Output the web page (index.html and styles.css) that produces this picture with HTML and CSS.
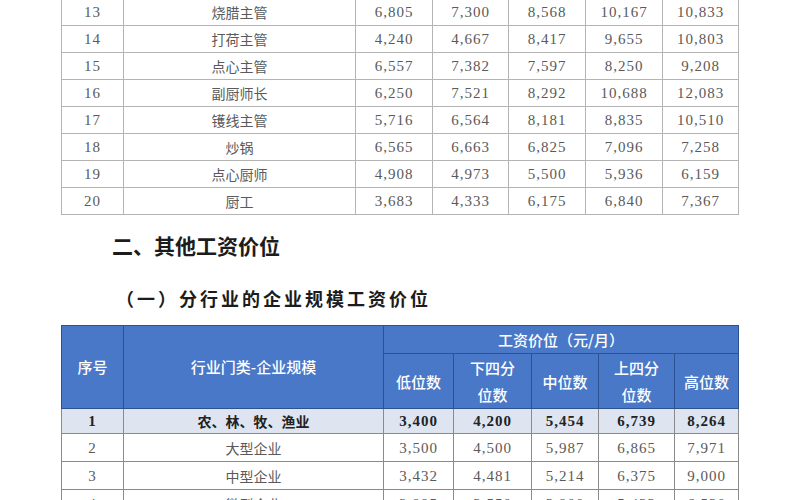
FILE: index.html
```html
<!DOCTYPE html>
<html lang="zh-CN">
<head>
<meta charset="utf-8">
<link rel="stylesheet" href="styles.css">
</head>
<body>
<div class="page">
  <table class="t1">
    <colgroup>
      <col style="width:62px"><col style="width:232px"><col style="width:77px"><col style="width:76px"><col style="width:77px"><col style="width:77px"><col style="width:76px">
    </colgroup>
    <tbody>
      <tr><td class="n">13</td><td>烧腊主管</td><td class="n">6,805</td><td class="n">7,300</td><td class="n">8,568</td><td class="n">10,167</td><td class="n">10,833</td></tr>
      <tr><td class="n">14</td><td>打荷主管</td><td class="n">4,240</td><td class="n">4,667</td><td class="n">8,417</td><td class="n">9,655</td><td class="n">10,803</td></tr>
      <tr><td class="n">15</td><td>点心主管</td><td class="n">6,557</td><td class="n">7,382</td><td class="n">7,597</td><td class="n">8,250</td><td class="n">9,208</td></tr>
      <tr><td class="n">16</td><td>副厨师长</td><td class="n">6,250</td><td class="n">7,521</td><td class="n">8,292</td><td class="n">10,688</td><td class="n">12,083</td></tr>
      <tr><td class="n">17</td><td>镬线主管</td><td class="n">5,716</td><td class="n">6,564</td><td class="n">8,181</td><td class="n">8,835</td><td class="n">10,510</td></tr>
      <tr><td class="n">18</td><td>炒锅</td><td class="n">6,565</td><td class="n">6,663</td><td class="n">6,825</td><td class="n">7,096</td><td class="n">7,258</td></tr>
      <tr><td class="n">19</td><td>点心厨师</td><td class="n">4,908</td><td class="n">4,973</td><td class="n">5,500</td><td class="n">5,936</td><td class="n">6,159</td></tr>
      <tr><td class="n">20</td><td>厨工</td><td class="n">3,683</td><td class="n">4,333</td><td class="n">6,175</td><td class="n">6,840</td><td class="n">7,367</td></tr>
    </tbody>
  </table>

  <h2 class="h2">二、其他工资价位</h2>
  <h3 class="h3">（一）分行业的企业规模工资价位</h3>

  <table class="t2">
    <colgroup>
      <col style="width:62px"><col style="width:260px"><col style="width:70px"><col style="width:78px"><col style="width:67px"><col style="width:76px"><col style="width:64px">
    </colgroup>
    <thead>
      <tr class="hr1"><th rowspan="2">序号</th><th rowspan="2">行业门类-企业规模</th><th colspan="5">工资价位（元/月）</th></tr>
      <tr class="hr2"><th>低位数</th><th>下四分<br>位数</th><th>中位数</th><th>上四分<br>位数</th><th>高位数</th></tr>
    </thead>
    <tbody>
      <tr class="hl r1"><td class="n">1</td><td>农、林、牧、渔业</td><td class="n">3,400</td><td class="n">4,200</td><td class="n">5,454</td><td class="n">6,739</td><td class="n">8,264</td></tr>
      <tr><td class="n">2</td><td>大型企业</td><td class="n">3,500</td><td class="n">4,500</td><td class="n">5,987</td><td class="n">6,865</td><td class="n">7,971</td></tr>
      <tr><td class="n">3</td><td>中型企业</td><td class="n">3,432</td><td class="n">4,481</td><td class="n">5,214</td><td class="n">6,375</td><td class="n">9,000</td></tr>
      <tr><td class="n">4</td><td>微型企业</td><td class="n">2,995</td><td class="n">3,550</td><td class="n">3,900</td><td class="n">5,433</td><td class="n">6,530</td></tr>
    </tbody>
  </table>
</div>
</body>
</html>
```

FILE: styles.css
```css
html, body {
  margin: 0;
  padding: 0;
  background: #ffffff;
}

.page {
  width: 800px;
  height: 500px;
  overflow: hidden;
  font-family: "Noto Sans CJK SC", "Noto Sans", sans-serif;
}

table {
  border-collapse: collapse;
  table-layout: fixed;
  width: 677px;
  margin-left: 61px;
}

td, th {
  padding: 0;
  text-align: center;
  vertical-align: middle;
  font-size: 14px;
  line-height: 18px;
}

.n {
  font-family: "Liberation Serif", "DejaVu Serif", serif;
  font-size: 15px;
  letter-spacing: 1px;
}

/* upper table */
.t1 {
  margin-top: -2px;
  color: #5a5a5a;
  border: 1px solid #a8a8a8;
}

.t1 td {
  border: 1px solid #b4b4b4;
  height: 26px;
}

.h2 {
  margin: 16px 0 0 112px;
  font-size: 21px;
  line-height: 28px;
  font-weight: 700;
  color: #1c1c1c;
}

.h3 {
  margin: 26px 0 0 116px;
  font-size: 18px;
  line-height: 26px;
  letter-spacing: 3px;
  font-weight: 700;
  color: #1c1c1c;
}

/* lower table */
.t2 {
  margin-top: 14px;
  color: #5a5a5a;
}

.t2 th {
  background: #4a78c8;
  color: #ffffff;
  font-weight: 500;
  font-size: 15px;
  border: 1px solid #2e5190;
}

.hr1 th {
  height: 27px;
}

.hr2 th {
  height: 51px;
  line-height: 27px;
}

.t2 td {
  border: 1px solid #8a8a8a;
  height: 27px;
}

.t2 .r1 td {
  height: 24px;
}

.hl td {
  background: #dfe5f0;
  color: #222222;
  font-weight: 700;
}
```
